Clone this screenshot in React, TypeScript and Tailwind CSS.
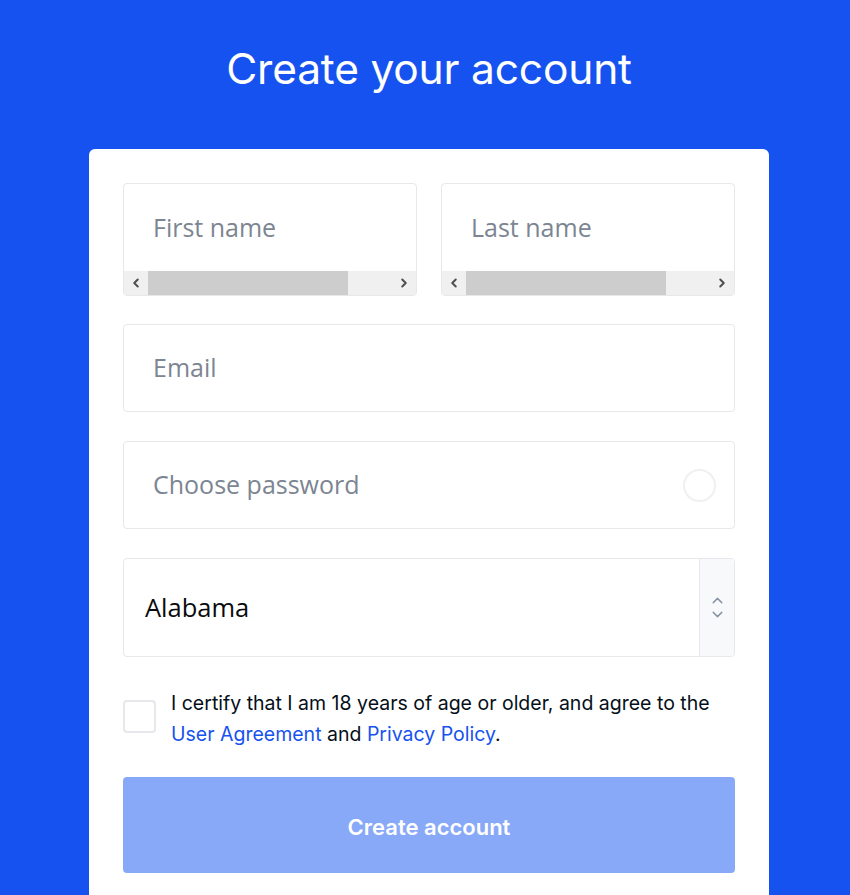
import { ChevronLeft, ChevronRight, ChevronUp, ChevronDown } from "lucide-react";

function ScrollInput({ placeholder }: { placeholder: string }) {
  return (
    <div className="flex-1 rounded-[4px] border border-[#e6e8eb] overflow-hidden">
      <div className="h-[87px] flex items-center pl-[29px] text-[25px] text-[#7c8591] font-['Open_Sans',sans-serif]">
        {placeholder}
      </div>
      <div className="h-[24px] bg-[#f0f0f0] flex items-center">
        <div className="w-[24px] flex justify-center text-[#505050]">
          <ChevronLeft size={14} strokeWidth={3.5} />
        </div>
        <div className="w-[200px] h-[24px] bg-[#cdcdcd]" />
        <div className="flex-1" />
        <div className="w-[24px] flex justify-center text-[#505050]">
          <ChevronRight size={14} strokeWidth={3.5} />
        </div>
      </div>
    </div>
  );
}

export default function App() {
  return (
    <div className="min-h-[895px] bg-[#1652f0] flex flex-col items-center pl-[8px] font-['Inter',sans-serif]">
      <h1 className="mt-[42px] text-[42.5px] leading-[54px] text-white font-normal tracking-[-0.2px]">
        Create your account
      </h1>

      <div className="mt-[53px] w-[680px] flex-1 bg-white rounded-t-[6px] px-[34px] pt-[34px]">
        {/* Name row */}
        <div className="flex gap-[24px]">
          <ScrollInput placeholder="First name" />
          <ScrollInput placeholder="Last name" />
        </div>

        {/* Email */}
        <div className="mt-[28px] h-[88px] rounded-[4px] border border-[#e6e8eb] flex items-center pl-[29px] text-[25px] text-[#7c8591] font-['Open_Sans',sans-serif]">
          Email
        </div>

        {/* Password */}
        <div className="mt-[29px] h-[88px] rounded-[4px] border border-[#e6e8eb] flex items-center justify-between pl-[29px] pr-[18px] text-[25px] text-[#7c8591] font-['Open_Sans',sans-serif]">
          <span>Choose password</span>
          <div className="w-[33px] h-[33px] rounded-full border-2 border-[#eef0f2]" />
        </div>

        {/* State select */}
        <div className="mt-[29px] h-[99px] rounded-[4px] border border-[#e6e8eb] flex overflow-hidden">
          <div className="flex-1 flex items-center pl-[21px] text-[25.5px] text-[#0a0b0d] font-['Open_Sans',sans-serif]">
            Alabama
          </div>
          <div className="w-[35px] bg-[#f8f9fb] border-l border-[#e6e8eb] flex flex-col items-center justify-center text-[#8a94a6]">
            <ChevronUp size={17} strokeWidth={2} className="-mb-[3px]" />
            <ChevronDown size={17} strokeWidth={2} />
          </div>
        </div>

        {/* Agreement */}
        <div className="mt-[31px] flex gap-[15px]">
          <div className="mt-[12px] w-[33px] h-[33px] shrink-0 rounded-[4px] border-2 border-[#e6e8eb]" />
          <p className="text-[19.5px] leading-[31px] text-[#050f19]">
            I certify that I am 18 years of age or older, and agree to the
            <br />
            <span className="text-[#1652f0]">User Agreement</span> and{" "}
            <span className="text-[#1652f0]">Privacy Policy</span>.
          </p>
        </div>

        {/* Submit */}
        <button className="mt-[27px] w-full h-[96px] pt-[5px] rounded-[4px] bg-[#88a8f8] text-white text-[22px] font-semibold">
          Create account
        </button>
      </div>
    </div>
  );
}
